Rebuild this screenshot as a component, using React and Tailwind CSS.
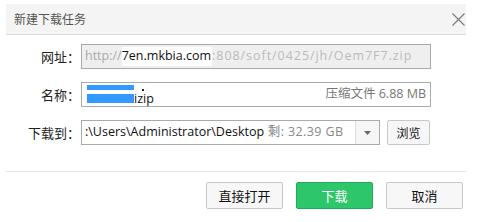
import React from "react"

const font = { fontFamily: '"Noto Sans CJK SC", "Noto Sans", sans-serif' }
const inputFont = { fontFamily: '"Open Sans", "Noto Sans CJK SC", sans-serif' }

const Label = ({ children }) => (
  <div className="w-[74px] shrink-0 text-right text-[13px] text-[#222] mr-[1px] [text-spacing-trim:space-all]">{children}</div>
)

const App = () => {
  return (
    <div className="w-[480px] h-[222px] bg-white pt-[4px] pl-[6px] overflow-hidden" style={font}>
      <div className="w-[460px]">
        {/* header */}
        <div className="h-[31px] bg-[#f4f4f4] border-b border-[#dcdcdc] flex items-center justify-between pl-[8px] pr-[1px]">
          <span className="text-[12px] text-[#555]">新建下载任务</span>
          <svg width="13" height="13" viewBox="0 0 13 13" className="text-[#777]">
            <path d="M0.5 0.5 L12.5 12.5 M12.5 0.5 L0.5 12.5" stroke="currentColor" strokeWidth="1.1" fill="none" />
          </svg>
        </div>

        {/* form */}
        <div className="pt-[9px] flex flex-col gap-[13px]">
          <div className="flex items-center">
            <Label>网址：</Label>
            <div className="w-[350px] h-[25px] border border-[#aaa] bg-[#efefef] flex items-center pl-[3px] text-[12.5px] whitespace-nowrap overflow-hidden" style={inputFont}>
              <span className="text-[#aaa]">http://</span>
              <span className="bg-white text-[#111] pr-[1px]">7en.mkbia.com</span>
              <span className="text-[#bbb] tracking-[0.95px]">:808/soft/0425/jh/Oem7F7.zip</span>
            </div>
          </div>

          <div className="flex items-center">
            <Label>名称：</Label>
            <div className="relative w-[350px] h-[25px] border border-[#aaa] bg-white flex items-center justify-between pl-[5px] pr-[4px] text-[12.5px] whitespace-nowrap" style={inputFont}>
              <div className="absolute left-[5px] top-[2px] w-[47px] h-[5px] bg-[#3399ff]" />
              <div className="absolute left-[60px] top-[6px] w-[2px] h-[2px] bg-[#222]" />
              <span className="flex items-center pt-[8px] leading-[12px]">
                <span className="inline-block w-[47px] h-[9px] bg-[#3399ff]" />
                <span className="text-[#111]">izip</span>
              </span>
              <span className="text-[#777]">压缩文件 6.88 MB</span>
            </div>
          </div>

          <div className="flex items-center">
            <Label>下载到：</Label>
            <div className="w-[299px] h-[25px] border border-[#aaa] bg-white flex items-center text-[12.5px] whitespace-nowrap" style={inputFont}>
              <span className="flex-1 pl-[3px] overflow-hidden">
                <span className="text-[#111]">:\Users\Administrator\Desktop</span>
                <span className="text-[#888] tracking-[0.4px]"> 剩: 32.39 GB</span>
              </span>
              <div className="w-[24px] h-full bg-[#f6f6f6] border-l border-[#ddd] flex items-center justify-center">
                <svg width="7" height="4" viewBox="0 0 7 4">
                  <path d="M0 0 L7 0 L3.5 4 Z" fill="#666" />
                </svg>
              </div>
            </div>
            <button className="ml-[7px] w-[43px] h-[25px] border border-[#c8c8c8] rounded-[2px] bg-[#f6f6f6] text-[12px] text-[#111]">浏览</button>
          </div>
        </div>

        {/* footer */}
        <div className="mt-[26px] border-t border-[#e6e6e6] pt-[10px] flex justify-end gap-[13px] pr-[3px]">
          <button className="w-[77px] h-[27px] border border-[#c8c8c8] rounded-[2px] bg-[#f7f7f7] text-[13px] text-[#111]">直接打开</button>
          <button className="w-[77px] h-[27px] border border-[#1fae58] rounded-[2px] bg-[#2ec66b] text-[13px] text-white">下载</button>
          <button className="w-[77px] h-[27px] border border-[#c8c8c8] rounded-[2px] bg-[#f7f7f7] text-[13px] text-[#111]">取消</button>
        </div>
      </div>
    </div>
  )
}

export default App
